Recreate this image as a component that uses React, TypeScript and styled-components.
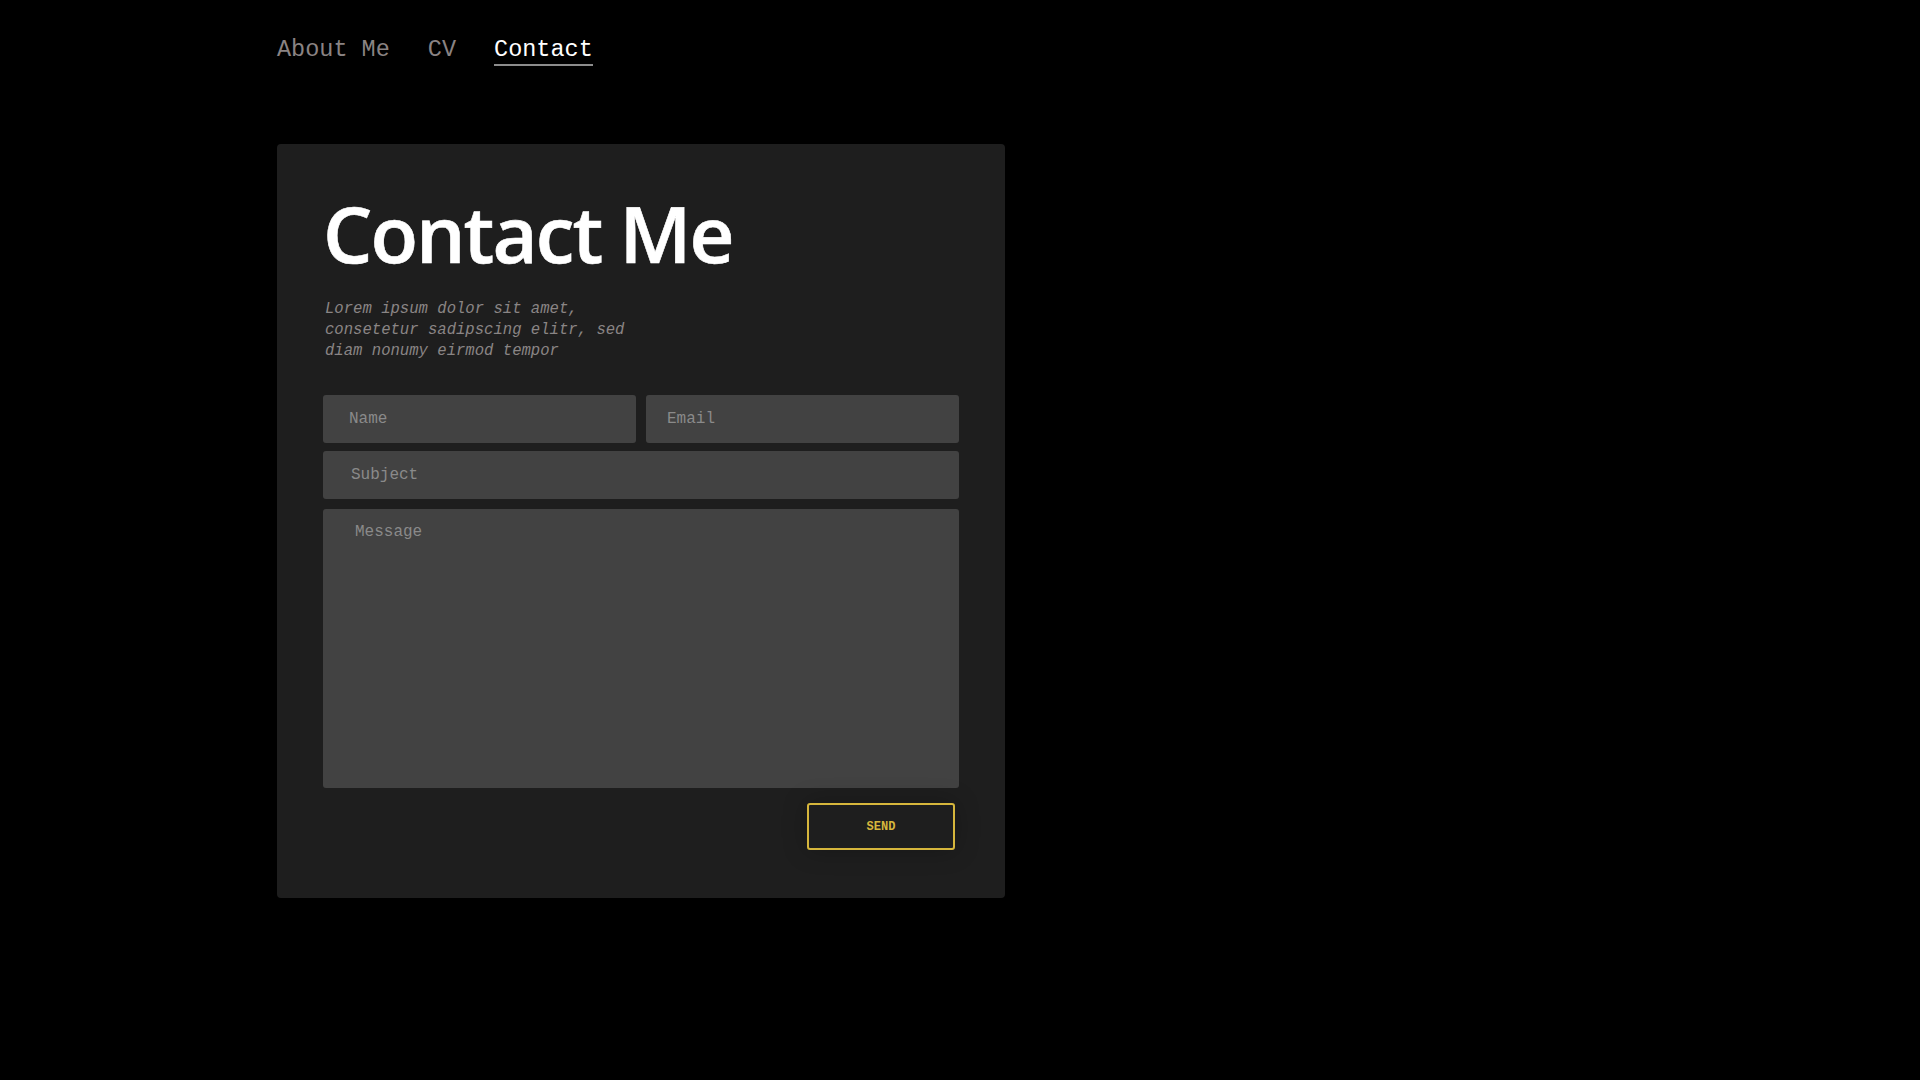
import React from "react";
import styled, { createGlobalStyle } from "styled-components";

const GlobalStyle = createGlobalStyle`
  html, body {
    margin: 0;
    padding: 0;
    background: #000;
  }
  body {
    font-family: "Liberation Mono", "DejaVu Sans Mono", monospace;
    color: #fff;
  }
  * { box-sizing: border-box; }
`;

const Page = styled.div`
  min-height: 1080px;
  padding: 36px 0 0 277px;
`;

const Nav = styled.nav`
  display: flex;
  gap: 38px;
  align-items: flex-start;
`;

const NavLink = styled.a<{ $active?: boolean }>`
  font-family: "Liberation Mono", "DejaVu Sans Mono", monospace;
  font-size: 23.5px;
  line-height: 28px;
  text-decoration: none;
  color: ${(p) => (p.$active ? "#ffffff" : "#8a8383")};
  border-bottom: 2px solid ${(p) => (p.$active ? "#8c8c8c" : "transparent")};
  cursor: pointer;
`;

const Card = styled.section`
  margin-top: 78px;
  width: 728px;
  background: #1e1e1e;
  border-radius: 4px;
  padding: 46px 46px 48px 46px;
`;

const Title = styled.h1`
  margin: 4px 0 0 0;
  font-family: "Open Sans", "Noto Sans", sans-serif;
  font-weight: 600;
  font-size: 78px;
  line-height: 78px;
  letter-spacing: -2px;
  color: #ffffff;
  -webkit-text-stroke: 0.6px #ffffff;
`;

const Intro = styled.p`
  margin: 27px 0 0 2px;
  max-width: 320px;
  font-family: "Liberation Mono", "DejaVu Sans Mono", monospace;
  font-style: italic;
  font-size: 15.6px;
  line-height: 21px;
  color: #8a8585;
`;

const Form = styled.form`
  margin-top: 33px;
  display: flex;
  flex-direction: column;
`;

const Row = styled.div`
  display: grid;
  grid-template-columns: 1fr 1fr;
  gap: 10px;
`;

const fieldBase = `
  width: 100%;
  border: none;
  outline: none;
  background: #424242;
  border-radius: 3px;
  font-family: "Liberation Mono", "DejaVu Sans Mono", monospace;
  font-size: 16px;
  color: #e0e0e0;
  &::placeholder {
    color: #8a8a8a;
    opacity: 1;
  }
`;

const Field = styled.input<{ $indent: number; $gapTop?: number }>`
  ${fieldBase}
  height: 48px;
  margin-top: ${(p) => p.$gapTop ?? 0}px;
  padding: 0 12px 0 ${(p) => p.$indent}px;
`;

const MessageBox = styled.textarea<{ $indent: number }>`
  ${fieldBase}
  display: block;
  margin-top: 10px;
  height: 279px;
  resize: none;
  line-height: 20px;
  padding: 13px 12px 12px ${(p) => p.$indent}px;
`;

const Actions = styled.div`
  display: flex;
  justify-content: flex-end;
  margin-top: 15px;
  padding-right: 4px;
`;

const SendButton = styled.button`
  width: 148px;
  height: 47px;
  background: transparent;
  border: 2px solid #d6b63c;
  border-radius: 3px;
  color: #d6b63c;
  font-family: "Liberation Mono", "DejaVu Sans Mono", monospace;
  font-weight: 700;
  font-size: 12px;
  letter-spacing: 0;
  cursor: pointer;
  box-shadow: 0 0 24px rgba(0, 0, 0, 0.25);
`;

export default function App() {
  return (
    <>
      <GlobalStyle />
      <Page>
        <Nav>
          <NavLink>About Me</NavLink>
          <NavLink>CV</NavLink>
          <NavLink $active>Contact</NavLink>
        </Nav>
        <Card>
          <Title>Contact Me</Title>
          <Intro>
            Lorem ipsum dolor sit amet, consetetur sadipscing elitr, sed diam
            nonumy eirmod tempor
          </Intro>
          <Form onSubmit={(e) => e.preventDefault()}>
            <Row>
              <Field $indent={26} placeholder="Name" />
              <Field $indent={21} placeholder="Email" />
            </Row>
            <Field $indent={28} $gapTop={8} placeholder="Subject" />
            <MessageBox $indent={32} placeholder="Message" />
            <Actions>
              <SendButton type="submit">SEND</SendButton>
            </Actions>
          </Form>
        </Card>
      </Page>
    </>
  );
}
